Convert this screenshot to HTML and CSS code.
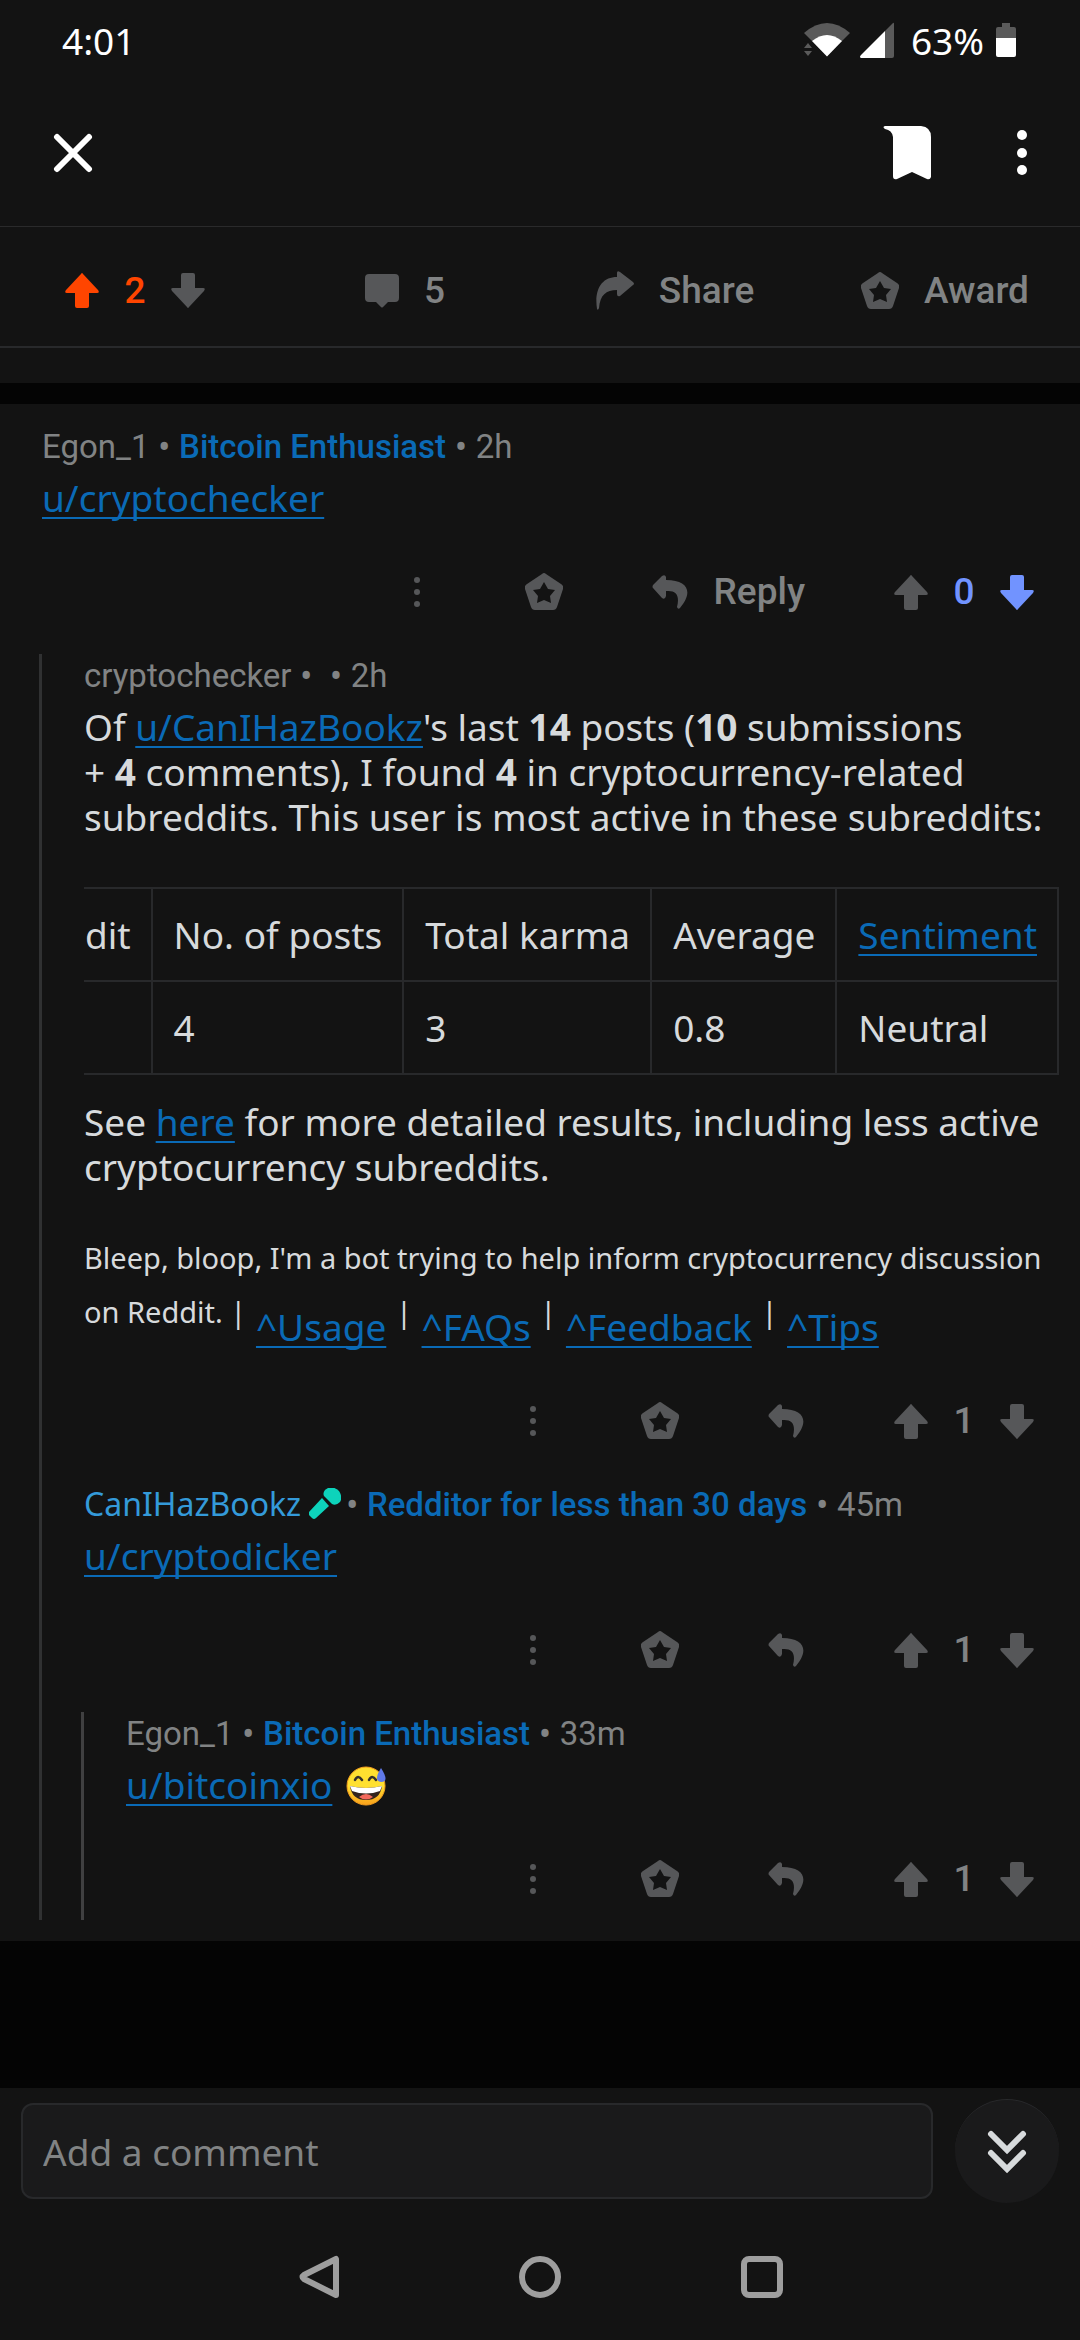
FILE: index.html
```html
<!DOCTYPE html>
<html lang="en">
<head>
<meta charset="utf-8">
<meta name="viewport" content="width=device-width, initial-scale=1">
<title>Comments</title>
<link rel="stylesheet" href="styles.css">
</head>
<body>
<svg class="sprite" aria-hidden="true">
  <symbol id="up" viewBox="0 0 34 35"><path d="M16 1Q17 -1 18 1L33 17Q35 20 32 20H24V33Q24 35 22 35H12Q10 35 10 33V20H2Q-1 20 1 17Z"/></symbol>
  <symbol id="down" viewBox="0 0 34 35"><path d="M16 34Q17 36 18 34L33 18Q35 15 32 15H24V2Q24 0 22 0H12Q10 0 10 2V15H2Q-1 15 1 18Z"/></symbol>
  <symbol id="bubble" viewBox="0 0 34 34"><path d="M4 0H30Q34 0 34 4V24Q34 28 30 28H23L18 33Q17 34 16 33L11 28H4Q0 28 0 24V4Q0 0 4 0Z"/></symbol>
  <symbol id="share" viewBox="0 0 38 39"><path d="M21 6V2Q21 -1 24 1L37 11Q39 13 37 14L24 25Q21 26 21 23V19C10 19 4 24 3 37Q2 40 1 38C-2 18 6 6 21 6Z"/></symbol>
  <symbol id="award" viewBox="0 0 38 38"><path fill-rule="evenodd" d="M17 1Q19 -1 21 1L36 11Q39 13 38 16L32 34Q31 37 28 37H10Q7 37 6 34L0 16Q-1 13 2 11ZM19 9L15 16L8 17L13 23L12 30L19 27L26 30L25 23L30 17L23 16Z"/></symbol>
  <symbol id="reply" viewBox="0 0 37 35"><path d="M14 5V2Q13 -1 10 1L1 10Q0 12 1 13L10 23Q13 25 14 21V16C24 15 28 20 25 32Q26 35 28 33C41 18 37 5 14 5Z"/></symbol>
  <symbol id="dots" viewBox="0 0 38 34"><circle cx="19" cy="5" r="3"/><circle cx="19" cy="17" r="3"/><circle cx="19" cy="29" r="3"/></symbol>
</svg>

<header class="status">
  <span>4:01</span>
  <div class="status-icons">
    <svg class="wifi" viewBox="0 0 48 36" aria-hidden="true"><path fill="#5a5a5a" d="M1 11Q24 -9 47 11L24 34Z"/><path fill="#131313" d="M0 20L9 19L20 32V36H0Z"/><path fill="#fff" d="M9 19Q24 7 39 19L24 34.500Z"/><path fill="#5a5a5a" d="M5 21L9 26H1ZM5 34L9 29H1Z"/></svg>
    <svg class="signal" viewBox="0 0 36 36" aria-hidden="true"><path fill="#5a5a5a" d="M34 1Q35 0 35 2V34Q35 36 33 36H26V9Z"/><path fill="#fff" d="M26 9V36H2Q0 35 2 33Z"/></svg>
    <span>63%</span>
    <svg class="battery" viewBox="0 0 20 34" aria-hidden="true"><path fill="#5a5a5a" d="M6 0H14V4H18Q20 4 20 6V15H0V6Q0 4 2 4H6Z"/><path fill="#fff" d="M0 15H20V32Q20 34 18 34H2Q0 34 0 32Z"/></svg>
  </div>
</header>

<nav class="toolbar">
  <button class="icon-btn" aria-label="Close"><svg width="40" height="40" viewBox="0 0 40 40"><path d="M4 4L36 36M36 4L4 36" stroke="#fff" stroke-width="6" stroke-linecap="round"/></svg></button>
  <div class="toolbar-right">
    <button class="icon-btn" aria-label="Saved"><svg width="48" height="54" viewBox="0 0 48 54"><path fill="#fff" d="M2 0H38Q48 1 48 11V51Q47 54 44 53L29 46L14 53Q10 54 10 50V11Q9 4 2 3Q-1 1 2 0Z"/></svg></button>
    <button class="icon-btn" aria-label="More options"><svg width="10" height="46" viewBox="0 0 10 46"><g fill="#fff"><circle cx="5" cy="5" r="5"/><circle cx="5" cy="23" r="5"/><circle cx="5" cy="40" r="5"/></g></svg></button>
  </div>
</nav>

<section class="post-actions">
  <div class="votes">
    <button class="icon-btn voted-up" aria-label="Upvote"><svg class="arrow"><use href="#up"/></svg></button>
    <span class="count voted-up">2</span>
    <button class="icon-btn" aria-label="Downvote"><svg class="arrow"><use href="#down"/></svg></button>
  </div>
  <button class="label-btn"><svg class="i-bubble"><use href="#bubble"/></svg><span>5</span></button>
  <button class="label-btn"><svg class="i-share"><use href="#share"/></svg><span>Share</span></button>
  <button class="label-btn"><svg class="i-award"><use href="#award"/></svg><span>Award</span></button>
</section>
<div class="post-end"></div>

<main class="comments">
  <article class="comment">
    <div class="meta">Egon_1<span class="sep"> • </span><b>Bitcoin Enthusiast</b><span class="sep"> • </span>2h</div>
    <p><a href="#">u/cryptochecker</a></p>
    <div class="actions">
      <button class="icon-btn" aria-label="More"><svg class="i-dots"><use href="#dots"/></svg></button>
      <button class="icon-btn" aria-label="Award"><svg class="i-award"><use href="#award"/></svg></button>
      <button class="label-btn"><svg class="i-reply"><use href="#reply"/></svg><span>Reply</span></button>
      <div class="votes">
        <button class="icon-btn" aria-label="Upvote"><svg class="arrow"><use href="#up"/></svg></button>
        <span class="count voted-down">0</span>
        <button class="icon-btn voted-down" aria-label="Downvote"><svg class="arrow"><use href="#down"/></svg></button>
      </div>
    </div>
  </article>

  <div class="thread">
    <article class="comment">
      <div class="meta">cryptochecker<span class="sep"> •&nbsp; • </span>2h</div>
      <p>Of <a href="#">u/CanIHazBookz</a>'s last <b>14</b> posts (<b>10</b> submissions +&nbsp;<b>4</b>&nbsp;comments), I found <b>4</b> in cryptocurrency-related subreddits. This user is most active in these subreddits:</p>
      <div class="table-scroll">
        <table>
          <thead><tr><th>Subreddit</th><th>No. of posts</th><th>Total karma</th><th>Average</th><th><a href="#">Sentiment</a></th></tr></thead>
          <tbody><tr><td></td><td>4</td><td>3</td><td>0.8</td><td>Neutral</td></tr></tbody>
        </table>
      </div>
      <p>See <a href="#">here</a> for more detailed results, including less active cryptocurrency subreddits.</p>
      <p class="footnote"><sup>Bleep, bloop, I'm a bot trying to help inform cryptocurrency discussion on Reddit. |</sup> <a href="#">^Usage</a> <sup>|</sup> <a href="#">^FAQs</a> <sup>|</sup> <a href="#">^Feedback</a> <sup>|</sup> <a href="#">^Tips</a></p>
      <div class="actions">
        <button class="icon-btn" aria-label="More"><svg class="i-dots"><use href="#dots"/></svg></button>
        <button class="icon-btn" aria-label="Award"><svg class="i-award"><use href="#award"/></svg></button>
        <button class="icon-btn" aria-label="Reply"><svg class="i-reply"><use href="#reply"/></svg></button>
        <div class="votes">
          <button class="icon-btn" aria-label="Upvote"><svg class="arrow"><use href="#up"/></svg></button>
          <span class="count">1</span>
          <button class="icon-btn" aria-label="Downvote"><svg class="arrow"><use href="#down"/></svg></button>
        </div>
      </div>
    </article>

    <article class="comment">
      <div class="meta"><span class="op">CanIHazBookz</span> <svg class="mic" viewBox="0 0 32 32" aria-hidden="true"><path fill="#0dd3bb" d="M15 8Q13 3 19 0Q25 -2 30 3Q34 9 31 14Q27 18 23 16Z"/><path fill="#0dd3bb" d="M13 10L20 18L7 30Q5 32 3 30L1 28Q-1 26 0 24Z"/></svg><span class="sep"> • </span><b>Redditor for less than 30 days</b><span class="sep"> • </span>45m</div>
      <p><a href="#">u/cryptodicker</a></p>
      <div class="actions">
        <button class="icon-btn" aria-label="More"><svg class="i-dots"><use href="#dots"/></svg></button>
        <button class="icon-btn" aria-label="Award"><svg class="i-award"><use href="#award"/></svg></button>
        <button class="icon-btn" aria-label="Reply"><svg class="i-reply"><use href="#reply"/></svg></button>
        <div class="votes">
          <button class="icon-btn" aria-label="Upvote"><svg class="arrow"><use href="#up"/></svg></button>
          <span class="count">1</span>
          <button class="icon-btn" aria-label="Downvote"><svg class="arrow"><use href="#down"/></svg></button>
        </div>
      </div>
    </article>

    <div class="thread thread-inner">
      <article class="comment">
        <div class="meta">Egon_1<span class="sep"> • </span><b>Bitcoin Enthusiast</b><span class="sep"> • </span>33m</div>
        <p><a href="#">u/bitcoinxio</a> <svg class="emoji" viewBox="0 0 40 40" role="img" aria-label="grinning face with sweat"><defs><linearGradient id="face" x2="0" y2="1"><stop offset=".5" stop-color="#ffe030"/><stop offset="1" stop-color="#f9a01b"/></linearGradient></defs><circle cx="20" cy="20" r="19" fill="url(#face)" stroke="#f59f1e"/><path fill="none" stroke="#35302b" stroke-width="2.500" stroke-linecap="round" d="M9 14Q12 8 16 14M23 14Q26 8 30 14"/><path fill="#33241c" d="M4 20Q20 24 36 20Q34 34 20 34Q6 34 4 20Z"/><path fill="#fff" d="M4 20Q20 24 36 20L34 25Q20 30 6 25Z"/><path fill="#f2695c" d="M13 31Q20 25 27 31Q20 36 13 31Z"/><path fill="#6079e8" d="M35 2Q44 16 35 16Q27 15 35 2Z"/></svg></p>
        <div class="actions">
          <button class="icon-btn" aria-label="More"><svg class="i-dots"><use href="#dots"/></svg></button>
          <button class="icon-btn" aria-label="Award"><svg class="i-award"><use href="#award"/></svg></button>
          <button class="icon-btn" aria-label="Reply"><svg class="i-reply"><use href="#reply"/></svg></button>
          <div class="votes">
            <button class="icon-btn" aria-label="Upvote"><svg class="arrow"><use href="#up"/></svg></button>
            <span class="count">1</span>
            <button class="icon-btn" aria-label="Downvote"><svg class="arrow"><use href="#down"/></svg></button>
          </div>
        </div>
      </article>
    </div>
  </div>
</main>

<footer class="bottom">
  <form class="composer">
    <input type="text" placeholder="Add a comment" aria-label="Add a comment">
    <button type="button" class="jump" aria-label="Next comment"><svg width="40" height="44" viewBox="0 0 40 44"><path d="M4 4L20 20L36 4M4 23L20 39L36 23" fill="none" stroke="#d7dadc" stroke-width="6" stroke-linecap="round"/></svg></button>
  </form>
  <nav class="system-nav">
    <button class="icon-btn" aria-label="Back"><svg width="42" height="44" viewBox="0 0 42 44"><path d="M39 4V40L7 24Q4 22 7 20Z"/></svg></button>
    <button class="icon-btn" aria-label="Home"><svg width="42" height="42" viewBox="0 0 42 42"><circle cx="21" cy="21" r="18"/></svg></button>
    <button class="icon-btn" aria-label="Recent apps"><svg width="42" height="42" viewBox="0 0 42 42"><rect x="3" y="3" width="36" height="36" rx="5"/></svg></button>
  </nav>
</footer>
</body>
</html>
```
FILE: styles.css
```css
* { box-sizing: border-box; }

body {
  margin: 0;
  min-height: 100vh;
  display: flex;
  flex-direction: column;
  background: #040404;
  color: #d7dadc;
  font-family: "Noto Sans", sans-serif;
  font-size: 37px;
}

.sprite { display: none; }

a {
  color: #0a6ab6;
  text-decoration: underline;
  text-decoration-thickness: 2px;
  text-underline-offset: 5px;
  text-decoration-skip-ink: none;
}

button {
  margin: 0;
  padding: 0;
  border: 0;
  background: none;
  color: inherit;
  font: inherit;
}

svg { display: block; fill: currentColor; }

.icon-btn { display: flex; color: #565759; }

.status {
  display: flex;
  justify-content: space-between;
  align-items: center;
  height: 80px;
  padding: 0 64px 0 62px;
  background: #131313;
  color: #fff;
}

.status-icons { display: flex; align-items: center; gap: 8px; }
.status-icons span { margin: 0 4px 0 8px; }
.wifi { width: 48px; height: 36px; }
.signal { width: 36px; height: 36px; }
.battery { width: 20px; height: 34px; }

.toolbar {
  display: flex;
  justify-content: space-between;
  align-items: center;
  height: 147px;
  padding: 0 53px;
  background: #131313;
  border-bottom: 1px solid #2a2a2b;
}

.toolbar-right { display: flex; align-items: center; gap: 86px; }

.post-actions {
  display: grid;
  grid-template-columns: repeat(4, 1fr);
  place-items: center;
  height: 121px;
  padding-top: 8px;
  background: #131313;
  border-bottom: 2px solid #28292b;
}

.post-end { height: 35px; background: #131313; margin-bottom: 21px; }

.label-btn,
.count {
  font: 500 37px/40px Roboto, sans-serif;
  color: #818384;
}

.label-btn { display: flex; align-items: center; gap: 25px; }
.label-btn svg { color: #565759; }
.votes { display: flex; align-items: center; }
.count { width: 72px; text-align: center; }
.voted-up { color: #ff4500; }
.voted-down { color: #7193ff; }

.arrow { width: 34px; height: 35px; }
.i-bubble { width: 34px; height: 34px; }
.i-share { width: 38px; height: 39px; }
.i-award { width: 38px; height: 38px; }
.i-reply { width: 37px; height: 35px; }
.i-dots { width: 38px; height: 34px; }

.comments { padding: 21px 0; background: #131313; }
.comments > .comment { padding-left: 42px; }

.thread {
  display: flow-root;
  margin-left: 39px;
  padding-left: 42px;
  border-left: 3px solid #303132;
}

.thread-inner { margin-left: -3px; border-color: #404041; }
.thread-inner > .comment:last-child { margin-bottom: -21px; }

.comment { padding: 4px 21px 0 0; }

.meta {
  margin-bottom: 10px;
  color: #818384;
  font: 400 33px/36px Roboto, sans-serif;
}

.meta b { font-weight: 500; color: #0a6ab6; }
.sep { font-family: "Noto Sans", sans-serif; line-height: 0; white-space: pre; }
.op { color: #349ad9; font-family: "Noto Sans", sans-serif; font-size: 32px; line-height: 0; }
.mic { display: inline-block; width: 32px; height: 32px; margin-right: -4px; vertical-align: -4px; }

p { margin: 0; line-height: 45px; }
p b { font-weight: 700; }

.table-scroll {
  display: flex;
  justify-content: flex-end;
  margin: 48px 0 24px;
  overflow: hidden;
}

table { border-collapse: collapse; flex: none; }

th, td {
  height: 93px;
  padding: 0 20px 0 21px;
  border: 2px solid #28292b;
  font-weight: 400;
  text-align: left;
  line-height: 45px;
  white-space: nowrap;
}

.footnote { margin-top: 52px; }
.footnote sup { font-size: 29px; line-height: 34px; vertical-align: 18px; }

.emoji { display: inline-block; width: 40px; height: 40px; margin-left: 4px; vertical-align: -7px; }

.actions {
  display: flex;
  justify-content: flex-end;
  align-items: center;
  gap: 89px;
  height: 124px;
  margin-top: 10px;
  padding-right: 25px;
}

.bottom { margin-top: auto; background: #131313; }

.composer {
  display: flex;
  align-items: center;
  gap: 22px;
  height: 126px;
  padding: 0 21px;
}

.composer input {
  flex: 1;
  min-width: 0;
  height: 96px;
  padding: 0 20px;
  border: 2px solid #28292b;
  border-radius: 12px;
  background: #1a1a1b;
  color: #d7dadc;
  font: inherit;
}

.composer input::placeholder { color: #818384; opacity: 1; }

.jump {
  display: grid;
  place-items: center;
  width: 104px;
  height: 104px;
  border-radius: 50%;
  background: #1a1a1b;
  border-top: 1px solid #28292b;
}

.system-nav {
  display: flex;
  justify-content: center;
  align-items: center;
  gap: 180px;
  height: 126px;
}

.system-nav svg {
  fill: none;
  stroke: #9e9e9e;
  stroke-width: 6px;
  stroke-linejoin: round;
}
```
